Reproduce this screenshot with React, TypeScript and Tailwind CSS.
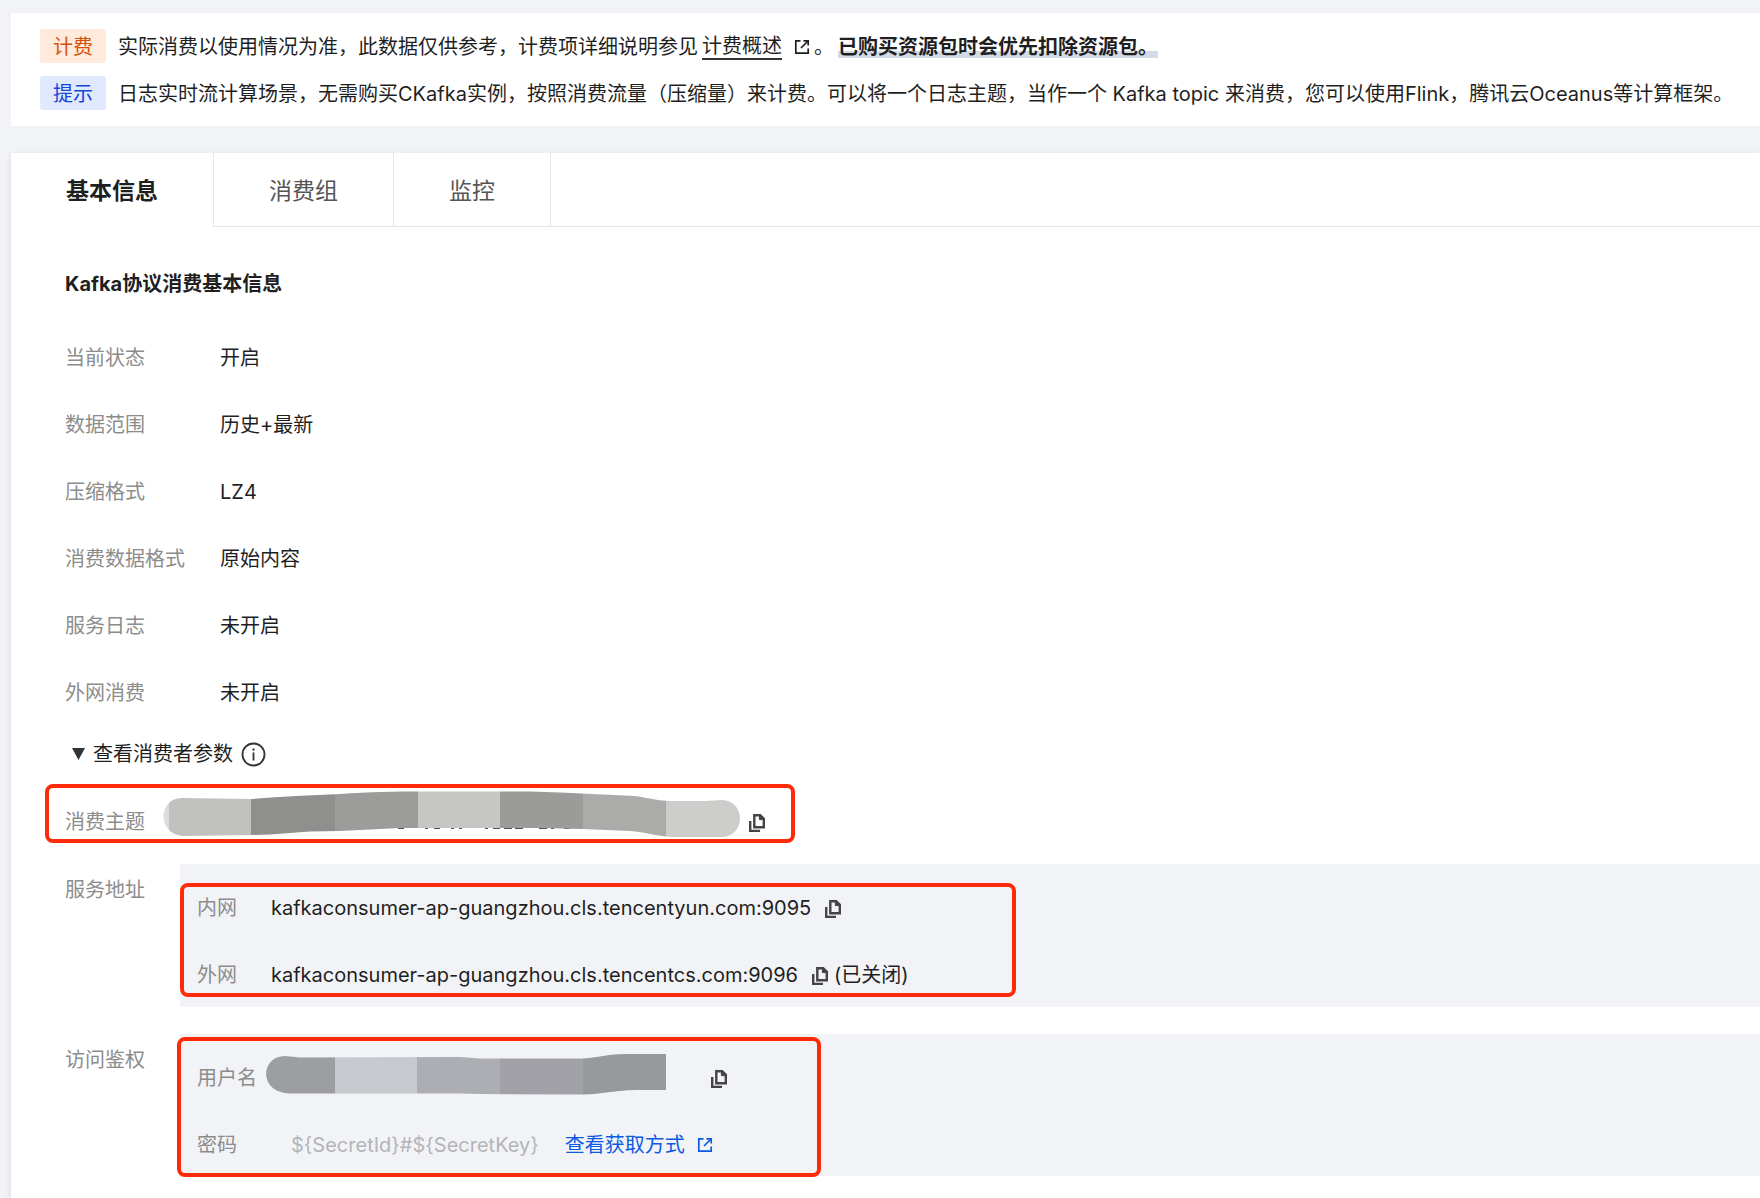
import React from "react";

function CopyIcon() {
  return (
    <svg width="18" height="20" viewBox="0 0 18 20" fill="none" stroke="#444" strokeWidth="2.4" aria-hidden="true">
      <path d="M6.300 2.200H12.200L15.800 5.800V14.200H6.300Z" />
      <path d="M11.400 2V6.600H16Z" fill="#444" strokeWidth="1" />
      <path d="M2.200 8V17.900H12" />
    </svg>
  );
}

function ExternalIcon({ className }: { className?: string }) {
  return (
    <svg className={className} width="16" height="16" viewBox="0 0 16 16" fill="none" stroke="currentColor" strokeWidth="1.7" aria-hidden="true">
      <path d="M6.5 1.8H1.8V14.2H14.2V9.5" />
      <path d="M9.5 1.8H14.2V6.5" />
      <path d="M14 2L7 9" />
    </svg>
  );
}

function InfoIcon() {
  return (
    <svg width="25" height="25" viewBox="0 0 25 25" fill="none" stroke="#333" aria-hidden="true">
      <circle cx="12.5" cy="12.5" r="11" strokeWidth="1.8" />
      <path d="M12.5 10.5V18.5" strokeWidth="1.8" />
      <path d="M12.5 6.5V8.6" strokeWidth="2" />
    </svg>
  );
}

function CopyButton({ label }: { label: string }) {
  return (
    <button type="button" aria-label={label} className="flex shrink-0 cursor-pointer items-center pt-0.5">
      <CopyIcon />
    </button>
  );
}

function TopicMask() {
  return (
    <svg width="578" height="48" viewBox="163 790 578 48" aria-hidden="true">
      <defs>
        <clipPath id="topic-shape">
          <path d="M182 798L251 799C280 797 310 795 340 794C370 792 395 791.5 420 791.5L530 791.5L560 792.5L635 796C650 798 658 801 672 801L705 801L722 800C746 801 746 836 722 837L672 837C655 836 645 832 630 831L583 829L540 828H400L340 831L310 831.500L270 834.500L251 835L185 836C157 836 157 798 182 798Z" />
        </clipPath>
      </defs>
      <path d="M398 828h6M425 828h3M434 828h6M451 828h3M459 828h3M485 828h3M493 828h7M504 828h8M515 828h8M539 828h8M551 828h3M564 828h6" stroke="#555" strokeWidth="2" />
      <g clipPath="url(#topic-shape)">
        <rect x="163" y="790" width="6" height="48" fill="#dcdcdc" />
        <rect x="169" y="790" width="82" height="48" fill="#c1c1c0" />
        <rect x="251" y="790" width="84" height="48" fill="#8f8f8e" />
        <rect x="335" y="790" width="83" height="48" fill="#9c9c9a" />
        <rect x="418" y="790" width="82" height="48" fill="#c6c6c4" />
        <rect x="500" y="790" width="83" height="48" fill="#9b9b99" />
        <rect x="583" y="790" width="83" height="48" fill="#ababaa" />
        <rect x="666" y="790" width="76" height="48" fill="#cdcdcc" />
      </g>
    </svg>
  );
}

function UserMask() {
  return (
    <svg width="440" height="52" viewBox="266 1051 440 52" className="shrink-0" aria-hidden="true">
      <defs>
        <clipPath id="user-shape">
          <path d="M285 1055L300 1056.500L460 1056L480 1057.500H583C600 1056 610 1053 625 1053L690 1053C708 1054 708 1088 690 1089L640 1089C615 1089 605 1093 583 1093.500L480 1093L460 1092.500H290C258 1092 260 1055 285 1055Z" />
        </clipPath>
      </defs>
      <g clipPath="url(#user-shape)">
        <rect x="266" y="1051" width="69" height="44" fill="#9d9ea2" />
        <rect x="335" y="1051" width="82" height="44" fill="#c8c9cf" />
        <rect x="417" y="1051" width="83" height="44" fill="#adaeb3" />
        <rect x="500" y="1051" width="83" height="44" fill="#a1a1a7" />
        <rect x="583" y="1051" width="83" height="44" fill="#979a9a" />
        <rect x="666" y="1051" width="40" height="44" fill="#f2f3f5" />
      </g>
    </svg>
  );
}

const details = [
  ["当前状态", "开启"],
  ["数据范围", "历史+最新"],
  ["压缩格式", "LZ4"],
  ["消费数据格式", "原始内容"],
  ["服务日志", "未开启"],
  ["外网消费", "未开启"],
];

const outline = "pointer-events-none absolute rounded-lg border-4 border-[#ff2a0a]";

export default function App() {
  return (
    <div className="flex min-h-screen flex-col overflow-x-hidden bg-[#f2f3f7] pt-[13px] pl-[11px] font-[Inter,'Noto_Sans_CJK_SC',sans-serif] text-[20px] leading-[30px] text-[#1f1f1f]">
      <section className="flex flex-col gap-[13px] bg-white py-4 pl-[29px]">
        <div className="flex items-center">
          <span className="mr-3 shrink-0 rounded-[3px] bg-[#ffeadb] px-[13px] pt-[3px] pb-px text-[#d4500c]">计费</span>
          <p className="flex items-center gap-1 pt-0.5 whitespace-nowrap">
            实际消费以使用情况为准，此数据仅供参考，计费项详细说明参见
            <a href="#billing" className="flex items-center gap-3">
              <span className="border-b-2 border-[#333] leading-[24px]">计费概述</span>
              <ExternalIcon />
            </a>
            <span>。</span>
            <strong className="bg-linear-to-b from-transparent from-70% to-[#d5dbe6] to-70% leading-[22px] font-bold">已购买资源包时会优先扣除资源包。</strong>
          </p>
        </div>
        <div className="flex items-center">
          <span className="mr-3 shrink-0 rounded-[3px] bg-[#e0e9ff] px-[13px] pt-[3px] pb-px text-[#1447d4]">提示</span>
          <p className="pt-0.5 whitespace-nowrap">
            日志实时流计算场景，无需购买CKafka实例，按照消费流量（压缩量）来计费。可以将一个日志主题，当作一个 Kafka topic 来消费，您可以使用Flink，腾讯云Oceanus等计算框架。
          </p>
        </div>
      </section>

      <main className="mt-[27px] flex-1 bg-white shadow-[0_2px_6px_rgba(40,50,80,0.12)]">
        <nav role="tablist" className="flex text-[23px] text-[#555]">
          <button type="button" role="tab" aria-selected="true" className="h-[74px] border-r border-[#e3e7ed] px-[55px] pt-0.5 font-bold text-[#1f1f1f]">基本信息</button>
          <button type="button" role="tab" aria-selected="false" className="h-[74px] border-r border-b border-[#e3e7ed] px-[55px] pt-0.5">消费组</button>
          <button type="button" role="tab" aria-selected="false" className="h-[74px] border-r border-b border-[#e3e7ed] px-[55px] pt-0.5">监控</button>
          <div className="flex-1 border-b border-[#e3e7ed]" />
        </nav>

        <div className="pt-[42px] pl-[54px]">
          <h2 className="font-bold">Kafka协议消费基本信息</h2>
          <dl className="mt-11 flex flex-col gap-[37px]">
            {details.map(([label, value]) => (
              <div key={label} className="flex">
                <dt className="w-[155px] text-[#8c8c8c]">{label}</dt>
                <dd>{value}</dd>
              </div>
            ))}
          </dl>

          <div className="mt-[31px] flex items-center gap-2 pl-[7px]">
            <button type="button" aria-expanded="true" className="flex items-center gap-2">
              <svg width="13" height="12" viewBox="0 0 13 12" fill="#333" aria-hidden="true">
                <path d="M0 0H13L6.500 12Z" />
              </svg>
              查看消费者参数
            </button>
            <InfoIcon />
          </div>

          <div className="relative mt-[15px] flex h-[59px] items-center">
            <div className={`${outline} inset-y-0 -left-5 w-[750px]`} />
            <span className="mt-4 w-[98px] text-[#8c8c8c]">消费主题</span>
            <TopicMask />
            <div className="mt-4 ml-[7px]">
              <CopyButton label="复制消费主题" />
            </div>
          </div>

          <div className="mt-[21px] flex">
            <span className="w-[115px] pt-[11px] text-[#8c8c8c]">服务地址</span>
            <div className="relative flex h-[143px] flex-1 flex-col gap-[37px] bg-[#f2f3f7] pt-[29px] pl-[17px]">
              <div className={`${outline} top-[19px] left-0 h-[114px] w-[836px]`} />
              <div className="flex items-center">
                <span className="w-[74px] text-[#8c8c8c]">内网</span>
                <span className="mr-[13px]">kafkaconsumer-ap-guangzhou.cls.tencentyun.com:9095</span>
                <CopyButton label="复制内网地址" />
              </div>
              <div className="flex items-center">
                <span className="w-[74px] text-[#8c8c8c]">外网</span>
                <span className="mr-[13px]">kafkaconsumer-ap-guangzhou.cls.tencentcs.com:9096</span>
                <CopyButton label="复制外网地址" />
                <span className="ml-[5px]">(已关闭)</span>
              </div>
            </div>
          </div>

          <div className="mt-[27px] flex">
            <span className="w-[115px] pt-[11px] text-[#8c8c8c]">访问鉴权</span>
            <div className="relative flex h-[142px] flex-1 flex-col gap-[37px] bg-[#f2f3f7] pt-[29px] pl-[17px]">
              <div className={`${outline} top-[3px] -left-[3px] h-[140px] w-[644px]`} />
              <div className="flex h-[30px] items-center">
                <span className="w-[69px] text-[#8c8c8c]">用户名</span>
                <UserMask />
                <div className="ml-1">
                  <CopyButton label="复制用户名" />
                </div>
              </div>
              <div className="flex items-center">
                <span className="w-[94px] text-[#8c8c8c]">密码</span>
                <span className="text-[#b4b5b9]">{"${SecretId}#${SecretKey}"}</span>
                <a href="#secret" className="ml-[26px] flex items-center gap-3 text-[#0a5be0]">
                  查看获取方式
                  <ExternalIcon />
                </a>
              </div>
            </div>
          </div>
        </div>
      </main>
    </div>
  );
}
